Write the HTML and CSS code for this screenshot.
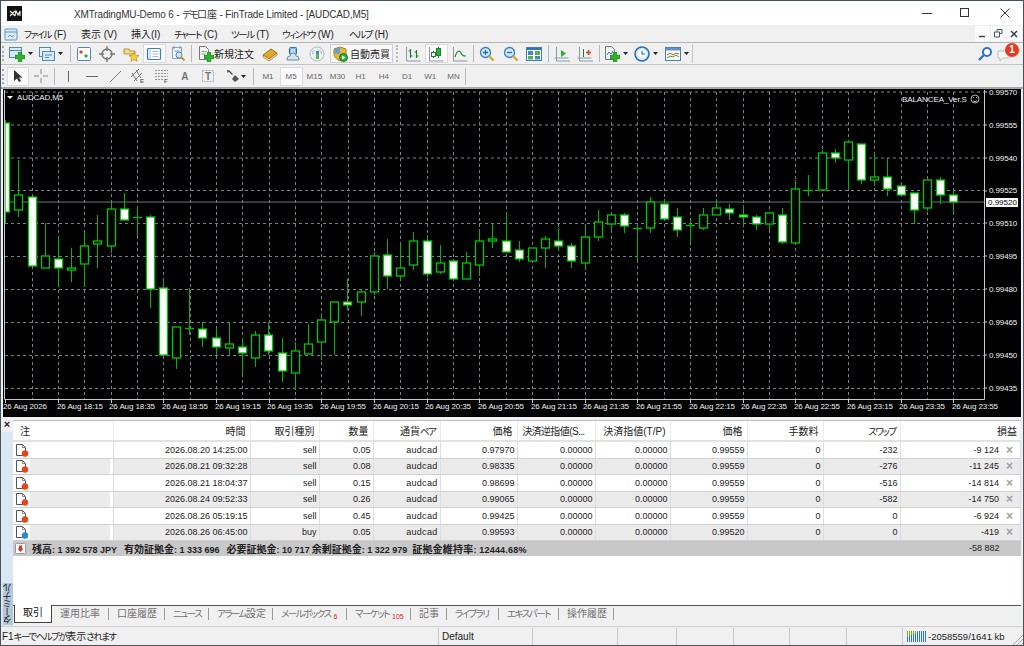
FILE: index.html
```html
<!DOCTYPE html>
<html lang="ja">
  <head>
    <meta charset="UTF-8" />
    <title>XMTradingMU-Demo 6</title>
    <link rel="stylesheet" href="styles.css">
  </head>
  <body>
    <svg class="defs" width="0" height="0">
      <symbol id="plus" viewBox="0 0 9 9"><path d="M3 0h3v3h3v3H6v3H3V6H0V3h3z" fill="#2cb52c" stroke="#127a12" stroke-width=".6"/></symbol>
      <symbol id="caret" viewBox="0 0 5 3"><path d="M0 0h5L2.500 3z" fill="#222"/></symbol>
      <symbol id="doc" viewBox="0 0 14 14"><path d="M1.500 1.500h6l3 3v8h-9z" fill="#fff" stroke="#555"/><path d="M7.500 1.500v3h3" fill="none" stroke="#888"/></symbol>
      <symbol id="lens" viewBox="0 0 16 16"><circle cx="6.500" cy="6.500" r="5" fill="#cfe6f7" stroke="#3b7fc0" stroke-width="1.300"/><path d="M10 10l4.500 4.500" stroke="#d8a93a" stroke-width="2.400"/></symbol>
    </svg>

    <!-- Title bar -->
    <header class="titlebar">
      <svg class="logo" width="15" height="15" viewBox="0 0 15 15"><rect width="15" height="15" fill="#111"/><path d="M3 5l5 5M8 5l-5 5M8 10l1-5 2 4 2-4v5" fill="none" stroke="#eee" stroke-width="1.100"/></svg>
      <span class="title">XMTradingMU-Demo 6 - <span class="k">デモ</span>口座 - FinTrade Limited - [AUDCAD,M5]</span>
      <div class="winbtns">
        <svg width="10" height="10" viewBox="0 0 10 10"><path d="M0 5.500h10" stroke="#333"/></svg>
        <svg width="10" height="10" viewBox="0 0 10 10"><rect x=".5" y=".5" width="8" height="8" fill="none" stroke="#333"/></svg>
        <svg width="10" height="10" viewBox="0 0 10 10"><path d="M.5.5l9 9M9.500.5l-9 9" stroke="#333"/></svg>
      </div>
    </header>

    <!-- Menu -->
    <nav class="menubar">
      <svg class="menu-icon" width="16" height="16" viewBox="0 0 16 16"><rect x="2" y="3" width="12" height="11" rx="1" fill="#dcebf8" stroke="#5b93c7"/><path d="M2 6h12" stroke="#5b93c7"/><path d="M5 11l2-2 2 2 2-2" fill="none" stroke="#5b93c7"/></svg>
      <span><span class="k">ファイル</span> (F)</span>
      <span>表示 (V)</span>
      <span>挿入(I)</span>
      <span><span class="k">チャート</span> (C)</span>
      <span><span class="k">ツール</span> (T)</span>
      <span><span class="k">ウィンドウ</span> (W)</span>
      <span><span class="k">ヘルプ</span> (H)</span>
      <div class="mdi">
        <button><svg width="8" height="8" viewBox="0 0 8 8"><path d="M1 6.500h6" stroke="#345" stroke-width="1.400"/></svg></button>
        <button><svg width="9" height="9" viewBox="0 0 9 9"><path d="M3 2.500V.5h5v4H6M.5 3h5v5h-5z" fill="none" stroke="#456"/></svg></button>
        <button><svg width="8" height="8" viewBox="0 0 8 8"><path d="M1 1l6 6M7 1L1 7" stroke="#345" stroke-width="1.500"/></svg></button>
      </div>
    </nav>

    <!-- Standard toolbar -->
    <div class="toolbar">
      <i class="grip"></i>
      <span class="tool dd first">
        <svg width="16" height="16" viewBox="0 0 16 16"><rect x=".5" y="1.500" width="12" height="10" fill="#d9e9f8" stroke="#4d87bd"/><path d="M.5 4.500h12" stroke="#4d87bd"/><use href="#plus" x="6" y="6" width="10" height="10"/></svg>
        <svg class="caret"><use href="#caret"/></svg>
      </span>
      <span class="tool dd">
        <svg width="16" height="16" viewBox="0 0 16 16"><rect x=".5" y="1.500" width="11" height="9" fill="#eaf2fa" stroke="#4d87bd"/><rect x="3.500" y="5.500" width="12" height="9" fill="#d9e9f8" stroke="#4d87bd"/><path d="M6 9h7M6 11.500h4" stroke="#4d87bd"/></svg>
        <svg class="caret"><use href="#caret"/></svg>
      </span>
      <i class="sep"></i>
      <span class="tool"><svg width="16" height="16" viewBox="0 0 16 16"><rect x="1.500" y="1.500" width="13" height="13" rx="1" fill="#fff" stroke="#4d87bd"/><path d="M5 4l2 2-2 2-2-2z" fill="#d9452c"/><path d="M10 8l2 2-2 2-2-2z" fill="#2fa52f"/></svg></span>
      <span class="tool"><svg width="16" height="16" viewBox="0 0 16 16"><circle cx="8" cy="8" r="5" fill="none" stroke="#777" stroke-width="1.400"/><path d="M8 0v5M8 11v5M0 8h5M11 8h5" stroke="#777" stroke-width="1.400"/></svg></span>
      <span class="tool"><svg width="16" height="16" viewBox="0 0 16 16"><path d="M1 3h5l1 2h5v3H1z" fill="#f1d98a" stroke="#b3974a"/><path d="M11 6l1.500 3.200 3.500.4-2.600 2.300.7 3.500-3.100-1.800-3.100 1.800.7-3.500L6 9.600l3.500-.4z" fill="#f5cf3a" stroke="#b99420" stroke-width=".7"/></svg></span>
      <span class="tool on"><svg width="16" height="16" viewBox="0 0 16 16"><rect x="1.500" y="2.500" width="13" height="11" rx="1" fill="#fff" stroke="#3f80bd" stroke-width="1.200"/><rect x="2" y="3" width="3" height="10" fill="#cfe3f5"/><path d="M6.500 5.500h6M6.500 8h6M6.500 10.500h6" stroke="#9fc0dd"/></svg></span>
      <span class="tool"><svg width="16" height="16" viewBox="0 0 16 16"><rect x="2.500" y="1.500" width="9" height="11" fill="#eef3f8" stroke="#8aa4bb"/><path d="M4 0v3M10 0v3M4.500 5h5" stroke="#7c97ad"/><circle cx="9" cy="9" r="3" fill="#d6e8f7" stroke="#4d87bd"/><path d="M11 11l3.500 3.500" stroke="#c79a30" stroke-width="2"/></svg></span>
      <i class="sep"></i>
      <span class="tool order">
        <svg width="16" height="16" viewBox="0 0 16 16"><path d="M1.500.5h6l3 3v10h-9z" fill="#f4f4f4" stroke="#777"/><path d="M3.500 5.500h5M3.500 8h4" stroke="#999"/><use href="#plus" x="6" y="6" width="10" height="10"/></svg>
        <b>新規注文</b>
      </span>
      <span class="tool"><svg width="16" height="16" viewBox="0 0 16 16"><path d="M1 9l8-6 6 4-8 6z" fill="#e2a62a" stroke="#99701a"/><path d="M1 9v2l6 4 8-6V7l-8 6z" fill="#f4e6bd" stroke="#99701a" stroke-width=".7"/></svg></span>
      <span class="tool"><svg width="16" height="16" viewBox="0 0 16 16"><rect x="4.500" y="1.500" width="7" height="7" rx="1" fill="#7fb4e6" stroke="#2f6da8"/><path d="M6 4h4M6 6h4" stroke="#fff"/><path d="M2 13a3 3 0 0 1 3-3 3 3 0 0 1 6 0 3 3 0 0 1 3 3v1H2z" fill="#d7e4ef" stroke="#6f8ba5"/></svg></span>
      <span class="tool"><svg width="16" height="16" viewBox="0 0 16 16"><circle cx="8" cy="8" r="7" fill="#eef2f4" stroke="#aebcc6"/><path d="M3.500 8a4.500 4.500 0 0 1 2-4M12.500 8a4.500 4.500 0 0 0-2-4" fill="none" stroke="#9fb0bc"/><path d="M7 5h3v8H7z" fill="#5cb45c"/><path d="M7 5h3v3H7z" fill="#3b86c5"/></svg></span>
      <span class="tool auto">
        <svg width="16" height="16" viewBox="0 0 16 16"><path d="M8 1l6 2v5c0 3-2 5-6 7-4-2-6-4-6-7V3z" fill="#e9b638" stroke="#a9801c"/><path d="M2.500 3.500L8 1.500v6H2.500z" fill="#5d9fd6"/><circle cx="11.500" cy="11.500" r="4" fill="#2fae3a" stroke="#167a20"/><path d="M10 9.500v4l3.500-2z" fill="#fff"/></svg>
        <b>自動売買</b>
      </span>
      <i class="sep dots"></i>
      <span class="tool"><svg width="16" height="16" viewBox="0 0 16 16"><path d="M1.500 1v14h14" fill="none" stroke="#8b9aa6"/><path d="M5.500 3v9M3.500 5h2M5.500 10h2M11.500 4v8M9.500 6h2M11.500 10h2" stroke="#1f7d35" stroke-width="1.200"/></svg></span>
      <span class="tool on"><svg width="16" height="16" viewBox="0 0 16 16"><path d="M1.500 1v14h14" fill="none" stroke="#8b9aa6"/><path d="M5.500 5v7M10.500 1v11" stroke="#1f7d35"/><rect x="3.500" y="6.500" width="4" height="4" fill="#fff" stroke="#1f7d35"/><rect x="8.500" y="2.500" width="4" height="7" fill="#2fae3a" stroke="#1f7d35"/></svg></span>
      <span class="tool"><svg width="16" height="16" viewBox="0 0 16 16"><path d="M1.500 1v14h14" fill="none" stroke="#8b9aa6"/><path d="M3 11c2-7 5-7 6-4s3 3 5 3" fill="none" stroke="#2a8a3e" stroke-width="1.200"/></svg></span>
      <i class="sep"></i>
      <span class="tool"><svg width="16" height="16"><use href="#lens"/><path d="M4 6.500h5M6.500 4v5" stroke="#1f6fb5" stroke-width="1.300"/></svg></span>
      <span class="tool"><svg width="16" height="16"><use href="#lens"/><path d="M4 6.500h5" stroke="#1f6fb5" stroke-width="1.300"/></svg></span>
      <span class="tool"><svg width="16" height="16" viewBox="0 0 16 16"><rect x=".5" y="1.500" width="15" height="13" fill="#fff" stroke="#3d7fb8"/><path d="M1 2h14v2H1z" fill="#2f74b0"/><rect x="2" y="5" width="5" height="4" fill="#3a8cc9"/><rect x="9" y="5" width="5" height="4" fill="#57b04c"/><rect x="2" y="10" width="5" height="3.500" fill="#57b04c"/><rect x="9" y="10" width="5" height="3.500" fill="#3a8cc9"/></svg></span>
      <i class="sep"></i>
      <span class="tool"><svg width="16" height="16" viewBox="0 0 16 16"><path d="M2.500 1v14H16M.5 12h14" fill="none" stroke="#8b9aa6"/><path d="M7 4v7l5-3.500z" fill="#2fae3a"/></svg></span>
      <span class="tool"><svg width="16" height="16" viewBox="0 0 16 16"><path d="M2.500 1v14H16M.5 12h14" fill="none" stroke="#8b9aa6"/><path d="M6.500 3v8" stroke="#1f7d35"/><path d="M9 6.500h5M11.500 4v5" stroke="#d9452c" stroke-width="1.600"/></svg></span>
      <i class="sep"></i>
      <span class="tool dd indicators">
        <svg width="16" height="16" viewBox="0 0 16 16"><path d="M1.500.5h6l3 3v10h-9z" fill="#eef2f5" stroke="#777"/><path d="M3 9l2-3 2 2 2-3" fill="none" stroke="#3b7fc0"/><use href="#plus" x="6" y="6" width="10" height="10"/></svg>
        <svg class="caret"><use href="#caret"/></svg>
      </span>
      <span class="tool dd clock">
        <svg width="16" height="16" viewBox="0 0 16 16"><circle cx="8" cy="8" r="7" fill="#d6e8f7" stroke="#1f6fb5" stroke-width="1.600"/><circle cx="8" cy="8" r="4.500" fill="#fff"/><path d="M8 5v3h3" fill="none" stroke="#1f6fb5" stroke-width="1.200"/></svg>
        <svg class="caret"><use href="#caret"/></svg>
      </span>
      <span class="tool dd last">
        <svg width="16" height="16" viewBox="0 0 16 16"><rect x=".5" y="1.500" width="15" height="13" fill="#fff" stroke="#4f7ea8"/><path d="M1 2h14v2.500H1z" fill="#5b93c7"/><path d="M2 9l3-2 3 2 3-2 3 1" fill="none" stroke="#d9452c"/><path d="M2 12l3-2 3 1 3-2 3 2" fill="none" stroke="#2fa52f"/></svg>
        <svg class="caret"><use href="#caret"/></svg>
      </span>
      <div class="toolbar-end">
        <svg width="16" height="16" viewBox="0 0 16 16"><circle cx="10" cy="6" r="4" fill="#fff" stroke="#2b6fd0" stroke-width="2"/><path d="M7 9l-5 5" stroke="#2b6fd0" stroke-width="2.400"/></svg>
        <span class="bubble">
          <svg width="14" height="12" viewBox="0 0 14 12"><path d="M2 1h10a1 1 0 0 1 1 1v5a1 1 0 0 1-1 1H6l-3 3V8H2a1 1 0 0 1-1-1V2a1 1 0 0 1 1-1z" fill="#f6f6f6" stroke="#bbb"/></svg>
          <em>1</em>
        </span>
      </div>
    </div>

    <!-- Drawing and period toolbar -->
    <div class="toolbar second">
      <i class="grip"></i>
      <span class="tool on pointer"><svg width="12" height="14" viewBox="0 0 12 14"><path d="M2 1v11l3-2.500L7 13l2-1-2-3.500h3.500z" fill="#333"/></svg></span>
      <span class="tool draw"><svg width="16" height="16" viewBox="0 0 16 16"><path d="M8 1v5M8 10v5M1 8h5M10 8h5" stroke="#888"/></svg></span>
      <i class="sep"></i>
      <span class="tool draw"><svg width="16" height="16" viewBox="0 0 16 16"><path d="M8.500 3v11" stroke="#666"/></svg></span>
      <span class="tool draw"><svg width="16" height="16" viewBox="0 0 16 16"><path d="M2 8.500h12" stroke="#666"/></svg></span>
      <span class="tool draw"><svg width="16" height="16" viewBox="0 0 16 16"><path d="M3 14L14 3" stroke="#777"/></svg></span>
      <span class="tool draw"><svg width="16" height="16" viewBox="0 0 16 16"><path d="M1 9l8-8M4 13l8-8M2 5l5 8M6 2l5 8" stroke="#777"/><text x="10" y="15" class="mini">E</text></svg></span>
      <span class="tool draw"><svg width="16" height="16" viewBox="0 0 16 16"><path d="M1 2.500h13M1 5.500h13M1 8.500h13M1 11.500h8" stroke="#999" stroke-dasharray="2 1"/><text x="10" y="15" class="mini">F</text></svg></span>
      <span class="tool draw text-tool">A</span>
      <span class="tool draw"><svg width="16" height="16" viewBox="0 0 16 16"><rect x="2.500" y="2.500" width="11" height="11" fill="none" stroke="#aaa" stroke-dasharray="2 1"/><text x="8" y="12" class="midt">T</text></svg></span>
      <span class="tool dd arrows">
        <svg width="16" height="16" viewBox="0 0 16 16"><path d="M5 2l4 4-1 1-4-4zM3 2l3 .5L3.500 5z" fill="#555"/><path d="M11 7l4 4-4 3-3-3z" fill="#555"/></svg>
        <svg class="caret"><use href="#caret"/></svg>
      </span>
      <i class="sep"></i>
      <span class="period">M1</span>
      <span class="period on">M5</span>
      <span class="period">M15</span>
      <span class="period">M30</span>
      <span class="period">H1</span>
      <span class="period">H4</span>
      <span class="period">D1</span>
      <span class="period">W1</span>
      <span class="period">MN</span>
      <i class="sep"></i>
    </div>

    <!-- Chart -->
    <svg class="chart" width="1018" height="328" viewBox="3 88 1018 328">
      <path class="grid" d="M5 91H984M5 124H984M5 157H984M5 189.500H984M5 222.500H984M5 255.500H984M5 288.500H984M5 321.500H984M5 354.500H984M5 387.500H984"/>
      <path class="grid" d="M32.500 91V398M58.500 91V398M84.500 91V398M111.500 91V398M137.500 91V398M163.500 91V398M190.500 91V398M216.500 91V398M242.500 91V398M269.500 91V398M295.500 91V398M321.500 91V398M348.500 91V398M374.500 91V398M400.500 91V398M427.500 91V398M453.500 91V398M479.500 91V398M506.500 91V398M532.500 91V398M558.500 91V398M585.500 91V398M611.500 91V398M637.500 91V398M664.500 91V398M690.500 91V398M716.500 91V398M743.500 91V398M769.500 91V398M795.500 91V398M822.500 91V398M848.500 91V398M874.500 91V398M901.500 91V398M927.500 91V398M953.500 91V398"/>
      <path class="bid" d="M5 201H984"/>
      <path class="wick" d="M5.500 119V222M18.500 159V216M45.500 222V267M58.500 235V285M71.500 247V281M84.500 232V285M97.500 214V267M111.500 202V252M124.500 192V219M137.500 205V235M150.500 214V307M163.500 277V354M176.500 326V368M189.500 287V334M202.500 321V346M216.500 327V354M229.500 321V354M242.500 337V373M255.500 330V366M268.500 321V354M282.500 337V381M295.500 341V389M308.500 323V353M321.500 312V359M334.500 301V354M347.500 278V309M361.500 288V315M374.500 251V294M387.500 238V288M400.500 244V279M413.500 231V269M427.500 234V276M440.500 244V273M453.500 258V278M466.500 251V278M479.500 228V275M492.500 222V247M506.500 211V251M519.500 240V261M532.500 247V260M545.500 235V267M558.500 227V250M571.500 242V267M585.500 224V269M598.500 209V240M611.500 214V230M624.500 212V232M637.500 223V259M650.500 196V232M664.500 198V218M677.500 207V236M690.500 219V241M703.500 207V229M716.500 198V214M729.500 203V219M743.500 204V225M756.500 214V229M769.500 212V229M782.500 207V243M795.500 179V242M808.500 174V195M822.500 149V189M835.500 148V162M848.500 139V188M861.500 143V183M874.500 152V185M887.500 157V195M901.500 181V196M914.500 192V223M927.500 179V210M940.500 176V203M953.500 189V212"/>
      <path class="doji" d="M133 216.500H142M185 327.500H194M633 227.500H642M686 224.500H695M804 189.500H813"/>
      <rect class="dn clip" x="5" y="122" height="89"/>
      <rect class="up" x="14.500" y="194" height="15"/>
      <rect class="dn" x="28.500" y="196" height="69"/>
      <rect class="up" x="41.500" y="255" height="12"/>
      <rect class="dn" x="54.500" y="258" height="9"/>
      <rect class="up" x="67.500" y="267" height="2"/>
      <rect class="up" x="80.500" y="245" height="18"/>
      <rect class="up" x="93.500" y="240" height="3"/>
      <rect class="up" x="107.500" y="208" height="37"/>
      <rect class="dn" x="120.500" y="208" height="11"/>
      <rect class="dn" x="146.500" y="216" height="72"/>
      <rect class="dn" x="159.500" y="287" height="67"/>
      <rect class="up" x="172.500" y="326" height="31"/>
      <rect class="dn" x="198.500" y="328" height="9"/>
      <rect class="dn" x="212.500" y="337" height="9"/>
      <rect class="up" x="225.500" y="343" height="4"/>
      <rect class="dn" x="238.500" y="346" height="6"/>
      <rect class="up" x="251.500" y="334" height="23"/>
      <rect class="dn" x="264.500" y="334" height="16"/>
      <rect class="dn" x="278.500" y="352" height="18"/>
      <rect class="up" x="291.500" y="350" height="22"/>
      <rect class="up" x="304.500" y="343" height="10"/>
      <rect class="up" x="317.500" y="319" height="22"/>
      <rect class="up" x="330.500" y="301" height="20"/>
      <rect class="dn" x="343.500" y="301" height="3"/>
      <rect class="up" x="357.500" y="291" height="10"/>
      <rect class="up" x="370.500" y="255" height="36"/>
      <rect class="dn" x="383.500" y="254" height="21"/>
      <rect class="up" x="396.500" y="267" height="8"/>
      <rect class="up" x="409.500" y="240" height="24"/>
      <rect class="dn" x="423.500" y="240" height="33"/>
      <rect class="up" x="436.500" y="262" height="9"/>
      <rect class="dn" x="449.500" y="260" height="18"/>
      <rect class="up" x="462.500" y="262" height="16"/>
      <rect class="up" x="475.500" y="240" height="24"/>
      <rect class="up" x="488.500" y="238" height="2"/>
      <rect class="dn" x="502.500" y="240" height="11"/>
      <rect class="dn" x="515.500" y="249" height="9"/>
      <rect class="up" x="528.500" y="247" height="13"/>
      <rect class="up" x="541.500" y="238" height="9"/>
      <rect class="dn" x="554.500" y="240" height="5"/>
      <rect class="dn" x="567.500" y="245" height="15"/>
      <rect class="up" x="581.500" y="236" height="26"/>
      <rect class="up" x="594.500" y="221" height="15"/>
      <rect class="up" x="607.500" y="214" height="9"/>
      <rect class="dn" x="620.500" y="214" height="11"/>
      <rect class="up" x="646.500" y="201" height="26"/>
      <rect class="dn" x="660.500" y="203" height="15"/>
      <rect class="dn" x="673.500" y="216" height="13"/>
      <rect class="up" x="699.500" y="214" height="13"/>
      <rect class="up" x="712.500" y="207" height="7"/>
      <rect class="dn" x="725.500" y="208" height="4"/>
      <rect class="dn" x="739.500" y="214" height="2"/>
      <rect class="dn" x="752.500" y="216" height="7"/>
      <rect class="up" x="765.500" y="212" height="11"/>
      <rect class="dn" x="778.500" y="214" height="27"/>
      <rect class="up" x="791.500" y="188" height="54"/>
      <rect class="up" x="818.500" y="152" height="37"/>
      <rect class="dn" x="831.500" y="152" height="5"/>
      <rect class="up" x="844.500" y="141" height="18"/>
      <rect class="dn" x="857.500" y="143" height="36"/>
      <rect class="up" x="870.500" y="176" height="3"/>
      <rect class="dn" x="883.500" y="176" height="12"/>
      <rect class="dn" x="897.500" y="185" height="9"/>
      <rect class="dn" x="910.500" y="192" height="17"/>
      <rect class="up" x="923.500" y="179" height="28"/>
      <rect class="dn" x="936.500" y="179" height="15"/>
      <rect class="dn" x="949.500" y="194" height="7"/>
      <path class="frame" d="M4.500 89V398.500H984.500V89"/>
      <path class="frame" d="M5.500 398V402M58.500 398V402M111.500 398V402M163.500 398V402M216.500 398V402M269.500 398V402M321.500 398V402M374.500 398V402M427.500 398V402M479.500 398V402M532.500 398V402M585.500 398V402M637.500 398V402M690.500 398V402M743.500 398V402M795.500 398V402M848.500 398V402M901.500 398V402M953.500 398V402"/>
      <path class="frame" d="M984 91h3M984 124h3M984 157h3M984 190h3M984 222h3M984 255h3M984 288h3M984 321h3M984 354h3M984 387h3"/>
      <path class="label-tri" d="M7 95h6l-3 3z"/>
      <text class="lbl" x="17" y="99">AUDCAD,M5</text>
      <text class="lbl" x="902" y="101">BALANCEA_Ver.S</text>
      <g class="smile"><circle cx="975" cy="98" r="4"/><path d="M973 99.500c1 1.500 3 1.500 4 0M973 96.500h1M976 96.500h1"/></g>
      <g class="lbl">
        <text x="989" y="94">0.99570</text><text x="989" y="127">0.99555</text><text x="989" y="160">0.99540</text>
        <text x="989" y="192">0.99525</text><text x="989" y="225">0.99510</text><text x="989" y="258">0.99495</text>
        <text x="989" y="291">0.99480</text><text x="989" y="324">0.99465</text><text x="989" y="357">0.99450</text>
        <text x="989" y="390">0.99435</text>
      </g>
      <rect class="bid-box" x="986" y="197" width="32" height="9"/>
      <text class="bid-text" x="988" y="204">0.99520</text>
      <g class="lbl">
        <text x="3" y="408">26 Aug 2026</text><text x="57" y="408">26 Aug 18:15</text><text x="109" y="408">26 Aug 18:35</text>
        <text x="162" y="408">26 Aug 18:55</text><text x="215" y="408">26 Aug 19:15</text><text x="267" y="408">26 Aug 19:35</text>
        <text x="320" y="408">26 Aug 19:55</text><text x="373" y="408">26 Aug 20:15</text><text x="425" y="408">26 Aug 20:35</text>
        <text x="478" y="408">26 Aug 20:55</text><text x="531" y="408">26 Aug 21:15</text><text x="583" y="408">26 Aug 21:35</text>
        <text x="636" y="408">26 Aug 21:55</text><text x="689" y="408">26 Aug 22:15</text><text x="741" y="408">26 Aug 22:35</text>
        <text x="794" y="408">26 Aug 22:55</text><text x="847" y="408">26 Aug 23:15</text><text x="899" y="408">26 Aug 23:35</text>
        <text x="952" y="408">26 Aug 23:55</text>
      </g>
    </svg>

    <!-- Terminal -->
    <section class="terminal">
      <aside class="side">
        <span class="side-close">×</span>
        <span class="side-tab"><span class="k">ターミナル</span></span>
      </aside>
      <div class="term-main">
        <div class="table-wrap">
          <table class="trades">
            <colgroup>
              <col class="c-note"><col class="c-time"><col class="c-type"><col class="c-lot"><col class="c-pair"><col class="c-price"><col class="c-sl"><col class="c-tp"><col class="c-price"><col class="c-fee"><col class="c-swap"><col>
            </colgroup>
            <thead>
              <tr><th class="note">注</th><th>時間</th><th>取引種別</th><th>数量</th><th>通貨<span class="k">ペア</span></th><th>価格</th><th class="cut">決済逆指値(S...</th><th>決済指値(T/P)</th><th>価格</th><th>手数料</th><th><span class="k">スワップ</span></th><th class="pl">損益</th></tr>
            </thead>
            <tbody>
              <tr><td class="note"><svg class="doc-ico"><use href="#doc"/><circle cx="10" cy="10.500" r="3.200" class="red"/></svg></td><td>2026.08.20 14:25:00</td><td>sell</td><td>0.05</td><td class="pair">audcad</td><td>0.97970</td><td>0.00000</td><td>0.00000</td><td>0.99559</td><td>0</td><td>-232</td><td class="pl">-9 124<i class="x">×</i></td></tr>
              <tr><td class="note"><svg class="doc-ico"><use href="#doc"/><circle cx="10" cy="10.500" r="3.200" class="red"/></svg></td><td>2026.08.21 09:32:28</td><td>sell</td><td>0.08</td><td class="pair">audcad</td><td>0.98335</td><td>0.00000</td><td>0.00000</td><td>0.99559</td><td>0</td><td>-276</td><td class="pl">-11 245<i class="x">×</i></td></tr>
              <tr><td class="note"><svg class="doc-ico"><use href="#doc"/><circle cx="10" cy="10.500" r="3.200" class="red"/></svg></td><td>2026.08.21 18:04:37</td><td>sell</td><td>0.15</td><td class="pair">audcad</td><td>0.98699</td><td>0.00000</td><td>0.00000</td><td>0.99559</td><td>0</td><td>-516</td><td class="pl">-14 814<i class="x">×</i></td></tr>
              <tr><td class="note"><svg class="doc-ico"><use href="#doc"/><circle cx="10" cy="10.500" r="3.200" class="red"/></svg></td><td>2026.08.24 09:52:33</td><td>sell</td><td>0.26</td><td class="pair">audcad</td><td>0.99065</td><td>0.00000</td><td>0.00000</td><td>0.99559</td><td>0</td><td>-582</td><td class="pl">-14 750<i class="x">×</i></td></tr>
              <tr><td class="note"><svg class="doc-ico"><use href="#doc"/><circle cx="10" cy="10.500" r="3.200" class="red"/></svg></td><td>2026.08.26 05:19:15</td><td>sell</td><td>0.45</td><td class="pair">audcad</td><td>0.99425</td><td>0.00000</td><td>0.00000</td><td>0.99559</td><td>0</td><td>0</td><td class="pl">-6 924<i class="x">×</i></td></tr>
              <tr><td class="note"><svg class="doc-ico"><use href="#doc"/><circle cx="10" cy="10.500" r="3.200" class="blue"/></svg></td><td>2026.08.26 06:45:00</td><td>buy</td><td>0.05</td><td class="pair">audcad</td><td>0.99593</td><td>0.00000</td><td>0.00000</td><td>0.99520</td><td>0</td><td>0</td><td class="pl">-419<i class="x">×</i></td></tr>
              <tr class="summary">
                <td colspan="11"><div class="sum-line"><svg width="11" height="11" viewBox="0 0 11 11"><rect x=".5" y=".5" width="10" height="10" rx="1" fill="#fff" stroke="#999"/><path d="M4 2.500h3v3h1.500l-3 3.500-3-3.500H4z" fill="#d9351f"/></svg><span><span class="lab">残高</span>: 1 392 578 JPY</span><span><span class="lab">有効証拠金</span>: 1 333 696</span><span><span class="lab">必要証拠金</span>: 10 717</span><span><span class="lab">余剰証拠金</span>: 1 322 979</span><span><span class="lab">証拠金維持率</span>: 12444.68%</span></div></td>
                <td class="pl">-58 882<i class="x"></i></td>
              </tr>
            </tbody>
          </table>
        </div>
        <div class="tabs">
          <span class="tab active">取引</span>
          <span class="tab">運用比率</span>
          <span class="tab">口座履歴</span>
          <span class="tab"><span class="k">ニュース</span></span>
          <span class="tab"><span class="k">アラーム</span>設定</span>
          <span class="tab"><span class="k">メールボックス</span><sub>6</sub></span>
          <span class="tab"><span class="k">マーケット</span><sub>105</sub></span>
          <span class="tab">記事</span>
          <span class="tab"><span class="k">ライブラリ</span></span>
          <span class="tab"><span class="k">エキスパート</span></span>
          <span class="tab">操作履歴</span>
        </div>
      </div>
    </section>

    <!-- Status bar -->
    <footer class="statusbar">
      <span class="st-help">F1<span class="k">キーでヘルプが</span>表示<span class="k">されます</span></span>
      <span class="st-profile">Default</span>
      <span class="st-a"></span>
      <span class="st-d"></span>
      <span class="st-b"></span>
      <span class="st-c"></span>
      <span class="st-b"></span>
      <span class="st-c"></span>
      <span class="st-conn">
        <svg width="20" height="11" viewBox="0 0 20 11"><path d="M1.500 6v5M3.500 5v6M5.500 4v7M7.500 3v8M9.500 2v9M11.500 1v10M13.500 0v11M15.500 0v11M17.500 0v11M19.500 0v11" stroke="#2a78c0"/><path d="M1.500 0v6M3.500 0v5M5.500 0v4M7.500 0v3M9.500 0v2M11.500 0v1" stroke="#8aaa20"/></svg>
        -2058559/1641 kb
      </span>
      <svg class="grip-corner" width="11" height="11" viewBox="0 0 11 11"><path d="M1 11L11 1M5 11l6-6M9 11l2-2" stroke="#aaa"/></svg>
    </footer>
  </body>
</html>
```

FILE: styles.css
```css
/* General styles */
html,
body {
  margin: 0;
  padding: 0;
  width: 1024px;
  height: 646px;
  overflow: hidden;
}
body {
  box-sizing: border-box;
  border: 1px solid #46525e;
  display: flex;
  flex-direction: column;
  background-color: #f0f0f0;
  color: #222;
  font-family: "Liberation Sans", "Noto Sans CJK JP", sans-serif;
  font-size: 10px;
  font-feature-settings: "palt";
}
.defs {
  position: absolute;
}
svg {
  display: block;
  flex: none;
}
/* Narrow kana, the UI font squeezes them a lot */
.k {
  font-size: 9.500px;
  letter-spacing: -1.500px;
}

/* Title bar */
.titlebar {
  height: 24px;
  background-color: #fff;
  display: flex;
  align-items: center;
  flex: none;
}
.logo {
  margin-left: 6px;
}
.title {
  margin-left: 52px;
  font-size: 10px;
  letter-spacing: -.15px;
  color: #333;
}
.winbtns {
  margin-left: auto;
  display: flex;
  gap: 28px;
  margin-right: 13px;
}
.winbtns svg:nth-child(2) {
  margin-right: 2px;
}

/* Menu */
.menubar {
  height: 17px;
  flex: none;
  display: flex;
  align-items: center;
  padding-left: 2px;
  border-bottom: 1px solid #b5b5b5;
}
.menu-icon {
  margin-right: 5px;
}
.menubar > span {
  flex: none;
  white-space: nowrap;
}
.menubar > span:nth-of-type(1) { width: 57px; }
.menubar > span:nth-of-type(2) { width: 50px; }
.menubar > span:nth-of-type(3) { width: 43px; }
.menubar > span:nth-of-type(4) { width: 57px; }
.menubar > span:nth-of-type(5) { width: 51px; }
.menubar > span:nth-of-type(6) { width: 67px; }
.mdi {
  margin-left: auto;
  margin-right: 1px;
  display: flex;
  gap: 1px;
}
.mdi button {
  width: 15px;
  height: 15px;
  padding: 3px;
  margin: 0;
  border: 0;
  background-color: #fbfbfb;
}

/* Toolbars */
.toolbar {
  height: 21px;
  flex: none;
  display: flex;
  align-items: center;
  border-bottom: 1px solid #c4c4c4;
}
.toolbar.second {
  height: 22px;
  border-bottom: 2px solid #a8a8a8;
}
.grip {
  width: 3px;
  height: 15px;
  margin: 0 2px 0 1px;
  border-left: 2px dotted #aaa;
  box-sizing: border-box;
}
.sep {
  width: 1px;
  height: 17px;
  margin: 0 1.500px;
  background-color: #b8b8b8;
}
.sep.dots {
  width: 0;
  margin: 0 3px;
  background: none;
  border-left: 2px dotted #bbb;
}
.tool {
  width: 23.500px;
  height: 19px;
  box-sizing: border-box;
  display: flex;
  align-items: center;
  justify-content: center;
  flex: none;
}
.tool.on,
.period.on {
  background-color: #fafafa;
  border: 1px solid #dcdcdc;
}
.tool.dd {
  width: 30px;
  justify-content: flex-start;
  padding-left: 1px;
  gap: 3px;
}
.tool.dd.first {
  margin-left: 1px;
}
.tool.dd.indicators {
  width: 32px;
  padding-left: 3px;
}
.tool.dd.clock {
  width: 31px;
}
.tool.dd.last {
  width: 29px;
  border-right: 1px solid #c4c4c4;
}
.tool.dd.arrows {
  width: 32px;
  padding-left: 4px;
  gap: 1px;
}
.caret {
  width: 5px;
  height: 3px;
}
.tool.order {
  width: 64.500px;
  justify-content: flex-start;
  padding-left: 4.500px;
}
.tool.auto {
  width: 63px;
  margin-left: 1.500px;
  justify-content: flex-start;
  padding-left: 1px;
  gap: 2px;
  background-color: #fafafa;
  border: 1px solid #d0d0d0;
}
.tool b {
  font-weight: normal;
  font-size: 10px;
  color: #222;
  font-feature-settings: normal;
}
.toolbar-end {
  margin-left: auto;
  display: flex;
  align-items: center;
  gap: 4px;
  margin-right: 4px;
}
.bubble {
  position: relative;
  width: 22px;
  height: 16px;
  display: flex;
  align-items: flex-end;
}
.bubble em {
  position: absolute;
  top: -3px;
  right: 0;
  width: 14px;
  height: 14px;
  border-radius: 50%;
  background-color: #e53a1e;
  color: #fff;
  font-style: normal;
  font-weight: bold;
  font-size: 10px;
  line-height: 14px;
  text-align: center;
}
.toolbar.second .tool.pointer {
  width: 22px;
}
.toolbar.second .tool.draw {
  width: 23.300px;
}
.text-tool {
  font-size: 10px;
  font-weight: bold;
  color: #777;
}
.mini {
  font-size: 6px;
  font-weight: bold;
  fill: #666;
}
.midt {
  font-size: 10px;
  font-weight: bold;
  fill: #777;
  text-anchor: middle;
}
.period {
  width: 23.200px;
  height: 19px;
  box-sizing: border-box;
  flex: none;
  display: flex;
  align-items: center;
  justify-content: center;
  font-size: 8px;
  color: #666;
}
.toolbar.second .sep {
  margin: 0 2px 0 1.500px;
}
.toolbar.second .sep:last-child {
  margin-left: 0;
}

/* Chart */
.chart {
  margin-left: 2px;
  flex: none;
  background-color: #000;
}
.grid {
  fill: none;
  stroke: #76838f;
  stroke-dasharray: 3 3;
}
.bid {
  stroke: #6d757c;
  stroke-width: 1.200;
}
.wick,
.doji {
  fill: none;
  stroke: #00b400;
}
.doji {
  stroke-width: 1.300;
}
.up,
.dn {
  width: 8px;
  stroke: #00c800;
  stroke-width: 1.300;
}
.up {
  fill: #000;
}
.dn {
  fill: #fff;
}
.dn.clip {
  width: 4.500px;
}
.frame {
  fill: none;
  stroke: #c8c8c8;
}
.label-tri {
  fill: #fff;
}
.lbl {
  fill: #f0f0f0;
  font-size: 8px;
  letter-spacing: -.1px;
}
.smile {
  fill: none;
  stroke: #ddd;
  stroke-width: .8;
}
.bid-box {
  fill: #fff;
}
.bid-text {
  fill: #000;
  font-size: 8px;
}

/* Terminal */
.terminal {
  flex: 1;
  min-height: 0;
  display: flex;
}
.side {
  width: 12px;
  flex: none;
  display: flex;
  flex-direction: column;
  background-color: #dbe7f3;
}
.side-close {
  height: 15px;
  background-color: #f0f0f0;
  font-weight: bold;
  font-size: 11px;
  line-height: 15px;
  text-align: center;
}
.side-tab {
  margin-top: auto;
  margin-bottom: 1px;
  margin-left: 2px;
  height: 42px;
  background-color: #b4c8dc;
  display: flex;
  align-items: center;
  justify-content: center;
}
.side-tab span {
  writing-mode: vertical-rl;
  transform: rotate(180deg);
  line-height: 10px;
  color: #222;
}
.term-main {
  flex: 1;
  min-width: 0;
  display: flex;
  flex-direction: column;
  padding-right: 2px;
}
.table-wrap {
  flex: 1;
  min-height: 0;
  margin-top: 3px;
  background-color: #fff;
  border-top: 1px solid #c0c0c0;
}
.trades {
  width: 1008px;
  table-layout: fixed;
  border-collapse: collapse;
  font-size: 9px;
  color: #222;
}
.c-note { width: 100px; }
.c-time { width: 137px; }
.c-type { width: 69px; }
.c-lot { width: 54px; }
.c-pair { width: 67px; }
.c-price { width: 77px; }
.c-sl { width: 78px; }
.c-tp { width: 75px; }
.c-fee { width: 76px; }
.c-swap { width: 77px; }
.trades th {
  height: 20px;
  padding: 0 4px 0 0;
  box-sizing: border-box;
  font-weight: normal;
  font-size: 10px;
  text-align: right;
  white-space: nowrap;
  border-right: 1px solid #ececec;
  border-bottom: 2px solid #e2e2e2;
}
.trades th.note {
  text-align: left;
  padding-left: 7px;
}
.trades th.cut {
  padding-right: 10px;
  letter-spacing: -.6px;
}
.trades td {
  height: 17px;
  padding: 0 2px 0 0;
  box-sizing: border-box;
  text-align: right;
  white-space: nowrap;
  border-right: 1px solid #dedede;
  border-bottom: 1px solid #d0d0d0;
}
.trades tbody tr:nth-child(even) td {
  height: 16px;
  background-color: #ebebeb;
}
.trades td.note {
  padding-left: 2px;
  text-align: left;
}
.trades tbody tr:nth-child(even) td.note {
  background: linear-gradient(90deg, #fff 17px, #ebebeb 17px, #ebebeb 97px, #fff 97px);
}
.trades th.pl {
  padding-right: 3px;
}
.trades td.pl {
  padding-right: 0;
}
.pair {
  letter-spacing: .3px;
}
.doc-ico {
  width: 14px;
  height: 14px;
}
.red { fill: #e8431c; }
.blue { fill: #2a86d6; }
.x {
  display: inline-block;
  width: 21px;
  font-style: normal;
  font-weight: bold;
  font-size: 12px;
  line-height: 9px;
  color: #a0a0a0;
  text-align: center;
  vertical-align: -1px;
}
.trades tr.summary td {
  height: 16px;
  background-color: #c8c8c8;
  border: 0;
  text-align: left;
}
.trades tr.summary td.pl {
  text-align: right;
}
.sum-line {
  display: flex;
  align-items: center;
  padding-left: 2px;
  font-weight: bold;
  font-size: 9px;
  color: #222;
}
.sum-line svg {
  margin-right: 6px;
}
.sum-line > span + span {
  margin-left: 7px;
}
.sum-line > span:nth-child(4) {
  margin-right: -5px;
}
.sum-line > span:nth-child(5) {
  margin-right: -2px;
}
.sum-line > span:last-child {
  letter-spacing: .2px;
}
.lab {
  font-size: 10px;
}

/* Tabs */
.tabs {
  height: 21px;
  flex: none;
  display: flex;
  border-top: 1px solid #555;
  background-color: #f0f0f0;
  box-sizing: border-box;
}
.tab {
  height: 12px;
  box-sizing: border-box;
  padding-left: 8px;
  flex: none;
  margin-top: 2px;
  border-right: 1px solid #999;
  color: #707070;
  font-size: 10px;
  line-height: 12px;
  white-space: nowrap;
}
.tab:nth-child(2) { width: 57px; }
.tab:nth-child(3) { width: 56px; }
.tab:nth-child(4) { width: 44px; }
.tab:nth-child(5) { width: 64px; }
.tab:nth-child(6) { width: 74px; }
.tab:nth-child(7) { width: 64px; }
.tab:nth-child(8) { width: 36px; }
.tab:nth-child(9) { width: 52px; }
.tab:nth-child(10) { width: 60px; }
.tab:nth-child(11) { width: 55px; }
.tab sub {
  color: #e02020;
  font-size: 7px;
  line-height: 6px;
  vertical-align: -2px;
  margin-left: 3px;
}
.tab.active {
  width: 38px;
  height: 18px;
  margin: -1px 0 0 1px;
  padding: 0;
  box-sizing: border-box;
  text-align: center;
  line-height: 16px;
  color: #111;
  background-color: #fff;
  border: 1px solid #444;
  border-top: 0;
}

/* Status bar */
.statusbar {
  height: 19px;
  flex: none;
  display: flex;
  align-items: center;
  border-top: 1px solid #cfcfcf;
  box-sizing: border-box;
  position: relative;
}
.statusbar > span {
  height: 17px;
  line-height: 17px;
  box-sizing: border-box;
  padding-left: 3px;
  border-right: 1px solid #c8c8c8;
  flex: none;
}
.st-help { width: 438px; padding-left: 1px !important; }
.st-profile { width: 94px; }
.st-a { width: 85px; }
.st-d { width: 59px; }
.st-b { width: 57px; }
.st-c { width: 56px; }
.statusbar > span.st-conn {
  border-right: 0;
  display: flex;
  align-items: center;
  gap: 2px;
  padding-left: 3px;
  width: 112px;
  font-size: 9.500px;
}
.grip-corner {
  position: absolute;
  right: 0;
  bottom: 0;
}
```
